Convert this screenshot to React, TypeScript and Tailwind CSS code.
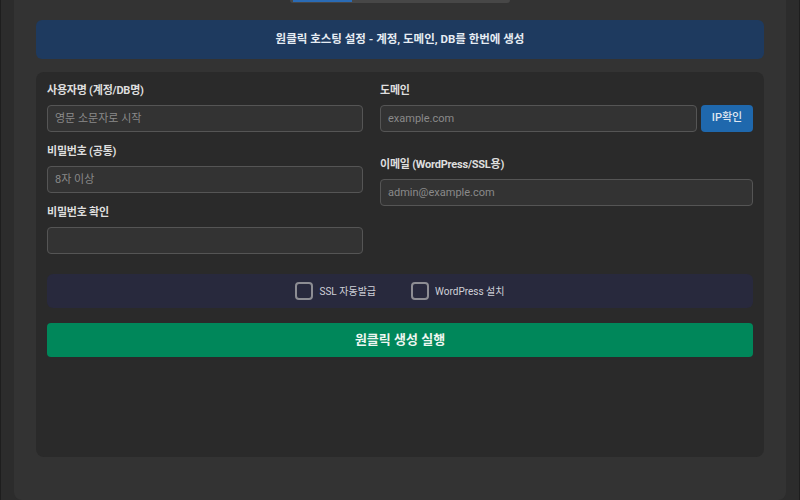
import React from 'react';

const Field: React.FC<{ label: string; placeholder?: string; type?: string; className?: string }> = ({ label, placeholder, type = 'text', className = '' }) => (
    <div className={`flex flex-col ${className}`}>
        <label className="text-[11px] leading-[14px] font-bold tracking-[-0.02em] text-[#dedede] mb-[7px]">{label}</label>
        <input
            type={type}
            placeholder={placeholder}
            className="h-[27px] w-full rounded-[4px] border border-[#555] bg-[#333] px-[7px] text-[11px] text-[#ddd] placeholder:text-[#8a8a8a] outline-none"
        />
    </div>
);

const Check: React.FC<{ label: string }> = ({ label }) => (
    <label className="flex items-center gap-[6px] text-[10px] text-[#cfd0d8]">
        <span className="block w-[18px] h-[18px] rounded-[4px] border-2 border-[#8d8d93]" />
        {label}
    </label>
);

export default function App() {
    return (
        <div
            className="h-[500px] w-[800px] overflow-hidden bg-[#2c2c2c] border-x border-[#1e1e1e] px-[13px]"
            style={{ fontFamily: "Roboto, 'Noto Sans CJK KR', sans-serif" }}
        >
            <div className="h-[500px] bg-[#333] rounded-b-lg px-[22px] flex flex-col">
                {/* tab strip cut off at the top */}
                <div className="flex justify-center">
                    <div className="w-[220px] h-[3px] bg-[#474747] rounded-b-md pl-[3px]">
                        <div className="w-[59px] h-[2px] bg-[#2a6bb5]" />
                    </div>
                </div>

                <div className="mt-[17px] h-[39px] rounded-md bg-[#1e3a5f] flex items-center justify-center text-[11.5px] font-bold text-[#e6ecf3]">
                    원클릭 호스팅 설정 - 계정, 도메인, DB를 한번에 생성
                </div>

                <div className="mt-[13px] h-[385px] rounded-lg bg-[#2a2a2a] px-[11px] pt-[12px]">
                    <div className="flex gap-[17px]">
                        <div className="w-[316px] flex flex-col gap-[13px]">
                            <Field label="사용자명 (계정/DB명)" placeholder="영문 소문자로 시작" />
                            <Field label="비밀번호 (공통)" placeholder="8자 이상" type="password" />
                            <Field label="비밀번호 확인" type="password" />
                        </div>
                        <div className="flex-1 flex flex-col">
                            <div className="flex flex-col">
                                <label className="text-[11px] leading-[14px] font-bold tracking-[-0.02em] text-[#dedede] mb-[7px]">도메인</label>
                                <div className="flex gap-[4px]">
                                    <input
                                        placeholder="example.com"
                                        className="h-[27px] flex-1 rounded-[4px] border border-[#555] bg-[#333] px-[7px] text-[11px] text-[#ddd] placeholder:text-[#8a8a8a] outline-none"
                                    />
                                    <button className="h-[27px] w-[52px] rounded-[4px] bg-[#1f68ad] text-[11px] font-medium text-[#dfe6f0]">IP확인</button>
                                </div>
                            </div>
                            <Field className="mt-[26px]" label="이메일 (WordPress/SSL용)" placeholder="admin@example.com" />
                        </div>
                    </div>

                    <div className="mt-[20px] h-[34px] rounded-md bg-[#28293d] flex items-center justify-center gap-[35px]">
                        <Check label="SSL 자동발급" />
                        <Check label="WordPress 설치" />
                    </div>

                    <button className="mt-[15px] h-[34px] w-full rounded-[4px] bg-[#00875a] text-[13px] font-bold text-[#eef6f1]">
                        원클릭 생성 실행
                    </button>
                </div>
            </div>
        </div>
    );
}
